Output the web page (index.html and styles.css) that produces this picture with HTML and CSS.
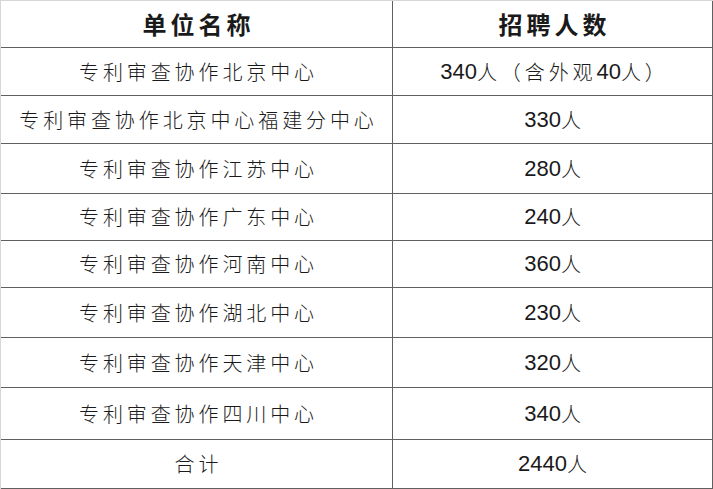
FILE: index.html
```html
<!DOCTYPE html>
<html lang="zh-CN">
<head>
<meta charset="utf-8">
<title>招聘人数</title>
<link rel="stylesheet" href="styles.css">
</head>
<body>
<div class="table">
  <div class="cell head">单位名称</div>
  <div class="cell head">招聘人数</div>

  <div class="cell">专利审查协作北京中心</div>
  <div class="cell"><span class="num">340</span>人（含外观<span class="num">40</span>人）</div>

  <div class="cell">专利审查协作北京中心福建分中心</div>
  <div class="cell"><span class="num">330</span>人</div>

  <div class="cell">专利审查协作江苏中心</div>
  <div class="cell"><span class="num">280</span>人</div>

  <div class="cell">专利审查协作广东中心</div>
  <div class="cell"><span class="num">240</span>人</div>

  <div class="cell">专利审查协作河南中心</div>
  <div class="cell"><span class="num">360</span>人</div>

  <div class="cell">专利审查协作湖北中心</div>
  <div class="cell"><span class="num">230</span>人</div>

  <div class="cell">专利审查协作天津中心</div>
  <div class="cell"><span class="num">320</span>人</div>

  <div class="cell">专利审查协作四川中心</div>
  <div class="cell"><span class="num">340</span>人</div>

  <div class="cell">合计</div>
  <div class="cell"><span class="num">2440</span>人</div>
</div>
</body>
</html>
```

FILE: styles.css
```css
html, body {
  margin: 0;
  padding: 0;
  background: #ffffff;
}

.table {
  display: grid;
  width: 713px;
  box-sizing: border-box;
  grid-template-columns: 392px 320px;
  grid-template-rows: 47px 48px 48px 50px 47px 47px 50px 50px 52px 49px;
  border-left: 1px solid #d6d6d6;
  border-top: 1px solid #d6d6d6;
  font-family: "Noto Sans CJK SC", "Noto Sans", sans-serif;
  color: #1a1a1a;
}

.cell {
  box-sizing: border-box;
  border-right: 1px solid #606060;
  border-bottom: 1px solid #606060;
  display: flex;
  align-items: center;
  justify-content: center;
  font-size: 20px;
  font-weight: 300;
  letter-spacing: 3.9px;
  padding-left: 4px;
  white-space: nowrap;
  line-height: 1;
}

.head {
  font-size: 24px;
  font-weight: 700;
  letter-spacing: 4px;
  padding-left: 4px;
}

.num {
  font-family: "Liberation Sans", Arial, sans-serif;
  font-size: 22px;
  font-weight: 400;
  letter-spacing: 0;
}
```
